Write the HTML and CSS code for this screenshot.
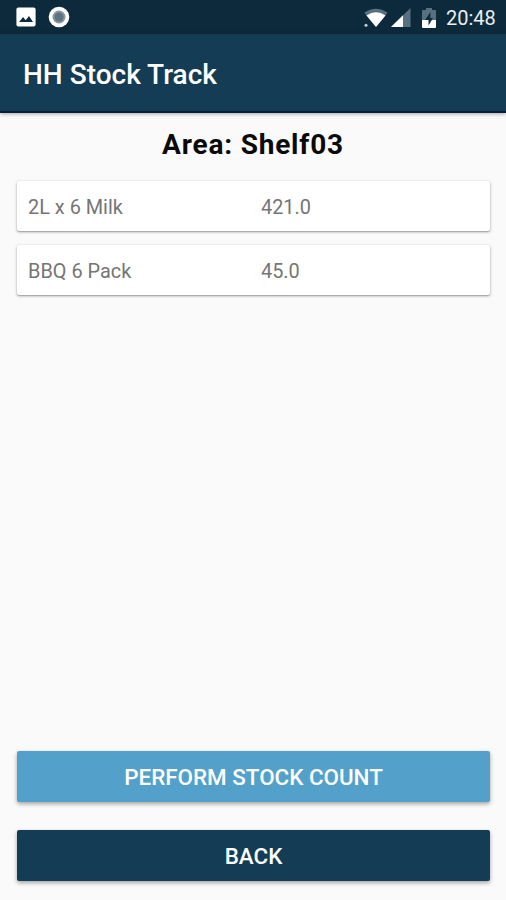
FILE: index.html
```html
<!DOCTYPE html>
<html lang="en">
<head>
<meta charset="utf-8">
<title>HH Stock Track</title>
<link rel="stylesheet" href="styles.css">
</head>
<body>
<div class="screen">
  <div class="status">
    <svg class="picture" width="20" height="20" viewBox="0 0 20 20"><rect x=".4" y=".4" width="19.2" height="19" rx="2" fill="#fff"/><path d="M3.2 15 7 10l2.700 3.300L13 9l4 6z" fill="#0d2a3c"/></svg>
    <svg class="record" width="22" height="22" viewBox="0 0 22 22"><circle cx="11" cy="11" r="10.300" fill="#fff"/><circle cx="11" cy="11" r="6.500" fill="#8796a0"/><circle cx="11" cy="11" r="4.500" fill="#5e7380"/></svg>
    <span class="space"></span>
    <svg class="wifi" width="24" height="20" viewBox="0 0 24 20"><path d="M.3 4.800Q11.800-3.300 23.600 4.800L12 19z" fill="#587080"/><path d="M2.500 7.500Q12 1.200 21.500 7.500L12 19z" fill="#fff"/><circle cx="2" cy="17.300" r="1.500" fill="#c5ced3"/></svg>
    <svg class="signal" width="20" height="20" viewBox="0 0 20 20"><path d="M0 19 19.500 0v19z" fill="#587080"/><path d="M0 19 12 7.200V19z" fill="#fff"/></svg>
    <svg class="battery" width="14" height="21" viewBox="0 0 14 21"><path d="M4 0h6v2h3q1 0 1 1v9H0V3q0-1 1-1h3z" fill="#587080"/><path d="M0 12h14v7q0 1-1 1H1q-1 0-1-1z" fill="#fff"/><path d="M8.500 4 3 12h3.500v5.500L11 10H8.300z" fill="#0d2a3c"/></svg>
    <span class="clock">20:48</span>
  </div>
  <header class="bar"><h1>HH Stock Track</h1></header>
  <main class="content">
    <h2>Area: Shelf03</h2>
    <div class="list">
      <div class="card"><span>2L x 6 Milk</span><span>421.0</span></div>
      <div class="card"><span>BBQ 6 Pack</span><span>45.0</span></div>
    </div>
    <div class="actions">
      <button class="primary">PERFORM STOCK COUNT</button>
      <button class="back">BACK</button>
    </div>
  </main>
</div>
</body>
</html>
```
FILE: styles.css
```css
* { box-sizing: border-box; }
body { margin: 0; font-family: Roboto, "Liberation Sans", sans-serif; background: #fafafa; }
.screen { width: 506px; height: 900px; display: flex; flex-direction: column; overflow: hidden; }
.status { height: 34px; flex: none; background: #0d2a3c; display: flex; align-items: center; padding: 0 11px 0 16px; color: #fff; }
.status svg { flex: none; }
.record { margin-left: 12px; }
.space { flex: 1; }
.wifi { margin-top: 2px; }
.signal { margin-left: 3px; margin-top: 2px; }
.battery { margin-left: 11px; margin-top: 2px; }
.clock { margin-left: 10px; width: 49px; font-size: 20px; line-height: 34px; padding-top: 2px; white-space: nowrap; color: #e8eef1; }
.bar { height: 79px; flex: none; background: #153c55; border-bottom: 2px solid #0b1c42; box-shadow: 0 1px 4px rgba(0,0,0,.35); display: flex; align-items: center; padding: 5px 23px 0; }
h1 { margin: 0; color: #fff; font-size: 28px; font-weight: 500; line-height: 36px; white-space: nowrap; }
.content { flex: 1; display: flex; flex-direction: column; padding: 14px 16px 19px; }
h2 { margin: 0; text-align: center; font-size: 28px; font-weight: 700; line-height: 36px; color: #0a0a0a; letter-spacing: .8px; }
.list { display: flex; flex-direction: column; gap: 14px; margin-top: 18px; }
.card { height: 50px; display: grid; grid-template-columns: 233px 1fr; align-items: center; padding: 2px 12px 0 11px; margin-left: 1px; background: #fff; border-radius: 2px; box-shadow: 0 1px 3px rgba(0,0,0,.35), 0 1px 1px rgba(0,0,0,.12); font-size: 19.900px; color: #757575; }
.actions { margin-top: auto; display: flex; flex-direction: column; gap: 28px; padding-left: 1px; }
button { height: 51px; border: 0; border-radius: 2px; padding: 0; font: 500 22.400px/30px Roboto, "Liberation Sans", sans-serif; color: #fff; box-shadow: 0 2px 4px rgba(0,0,0,.35); }
.primary { background: #53a1ca; }
.back { background: #153c55; }
```
